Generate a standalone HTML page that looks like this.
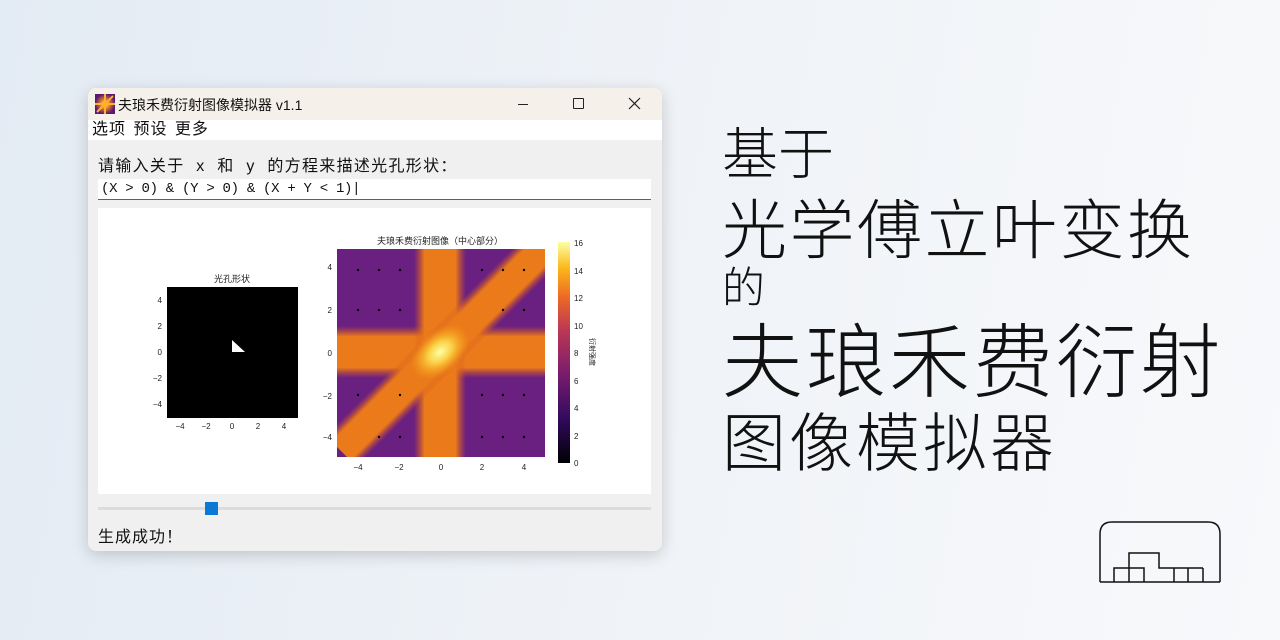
<!DOCTYPE html>
<html><head><meta charset="utf-8"><style>
*{margin:0;padding:0;box-sizing:border-box}
body{width:1280px;height:640px;overflow:hidden;background:linear-gradient(100deg,#e3ebf4 0%,#eef2f7 45%,#f8f9fb 100%);font-family:"Liberation Sans","Noto Sans CJK SC",sans-serif;position:relative}
.win{position:absolute;left:88px;top:88px;width:574px;height:463px;border-radius:8px;background:#f0f0f0;box-shadow:0 4px 16px rgba(0,0,0,.18);overflow:hidden}
.title{height:32px;background:#f5f1ea;position:relative;font-size:14px;color:#111}
.menu{height:20px;background:#fff;font-size:16px;line-height:20px;padding-left:4px;color:#111;letter-spacing:1px;word-spacing:2px}
.ab{position:absolute;font-family:"Liberation Sans","Noto Sans CJK SC",sans-serif}
.big{position:absolute;left:722px;font-family:"Noto Sans CJK SC",sans-serif;font-weight:300;color:#111;white-space:nowrap;line-height:1}
</style></head><body>
<div class="win">
 <div class="title">
  <svg class="ab" style="left:7px;top:6px" width="20" height="20"><defs><radialGradient id="ig"><stop offset="0" stop-color="#fff6a0"/><stop offset=".4" stop-color="#f08a20"/><stop offset="1" stop-color="#5a1a70"/></radialGradient></defs><rect width="20" height="20" fill="url(#ig)"/><path d="M0 10H20M10 0V20M2 18L18 2" stroke="#ffb030" stroke-width="2"/></svg>
  <span class="ab" style="left:30px;top:7px">夫琅禾费衍射图像模拟器 v1.1</span>
  <div class="ab" style="left:430px;top:16px;width:10px;height:1px;background:#222"></div>
  <div class="ab" style="left:485px;top:10px;width:11px;height:11px;border:1.2px solid #222;border-radius:1px"></div>
  <svg class="ab" style="left:540px;top:9px" width="13" height="13"><path d="M1 1L12 12M12 1L1 12" stroke="#222" stroke-width="1.2"/></svg>
 </div>
 <div class="menu">选项 预设 更多</div>
 <div class="ab" style="left:10px;top:64px;font-size:16px;color:#111;letter-spacing:1.3px;word-spacing:6px;white-space:pre">请输入关于 x 和 y 的方程来描述光孔形状：</div>
 <div class="ab" style="left:10px;top:91px;width:553px;height:21px;background:#fff;border-bottom:1.5px solid #1f6fc0;font-family:'Liberation Mono','Noto Sans CJK SC',monospace;font-size:14px;line-height:20px;padding-left:3px;color:#111;letter-spacing:-0.3px">(X &gt; 0) &amp; (Y &gt; 0) &amp; (X + Y &lt; 1)|</div>
 <div class="ab" style="left:10px;top:120px;width:553px;height:286px;background:#fff"></div>
 <div class="ab" style="left:10px;top:419px;width:553px;height:3px;background:#dcdcdc"></div>
 <div class="ab" style="left:117px;top:414px;width:13px;height:13px;background:#0a78d7"></div>
 <div class="ab" style="left:10px;top:435px;font-size:16px;color:#111;letter-spacing:1px">生成成功！</div>
</div>
<svg class="ab" style="left:0;top:0" width="662" height="500" font-family="Liberation Sans,Noto Sans CJK SC,sans-serif" font-size="8" fill="#222">
 <text x="232" y="282" text-anchor="middle" font-size="9">光孔形状</text>
 <rect x="167" y="287" width="131" height="131" fill="#000"/>
 <path d="M232 340V352H245Z" fill="#fff"/>
 <g text-anchor="end"><text x="162" y="303">4</text><text x="162" y="329">2</text><text x="162" y="355">0</text><text x="162" y="381">−2</text><text x="162" y="407">−4</text></g>
 <g text-anchor="middle"><text x="180" y="429">−4</text><text x="206" y="429">−2</text><text x="232" y="429">0</text><text x="258" y="429">2</text><text x="284" y="429">4</text></g>
 <defs>
  <linearGradient id="hb" x1="0" y1="0" x2="0" y2="1"><stop offset="0" stop-color="#d8561f" stop-opacity="0"/><stop offset=".2" stop-color="#ea7a1a"/><stop offset=".8" stop-color="#ea7a1a"/><stop offset="1" stop-color="#d8561f" stop-opacity="0"/></linearGradient>
  <linearGradient id="vb" x1="0" y1="0" x2="1" y2="0"><stop offset="0" stop-color="#d8561f" stop-opacity="0"/><stop offset=".2" stop-color="#ea7a1a"/><stop offset=".8" stop-color="#ea7a1a"/><stop offset="1" stop-color="#d8561f" stop-opacity="0"/></linearGradient>
  <radialGradient id="rc"><stop offset="0" stop-color="#fcffa4"/><stop offset=".4" stop-color="#fbd045"/><stop offset="1" stop-color="#f8a010" stop-opacity="0"/></radialGradient>
  <linearGradient id="cb" x1="0" y1="1" x2="0" y2="0"><stop offset="0" stop-color="#000004"/><stop offset=".2" stop-color="#320a5e"/><stop offset=".4" stop-color="#781c6d"/><stop offset=".6" stop-color="#bc3754"/><stop offset=".75" stop-color="#ed6925"/><stop offset=".88" stop-color="#fbb61a"/><stop offset="1" stop-color="#fcffa4"/></linearGradient>
  <clipPath id="hc"><rect x="337" y="249" width="208" height="208"/></clipPath>
 </defs>
 <text x="440" y="244" text-anchor="middle" font-size="9">夫琅禾费衍射图像（中心部分）</text>
 <g clip-path="url(#hc)">
  <rect x="337" y="249" width="208" height="208" fill="#6a2080"/>
  <rect x="337" y="326" width="208" height="52" fill="url(#hb)"/>
  <rect x="414" y="249" width="52" height="208" fill="url(#vb)"/>
  <rect x="300" y="330" width="300" height="44" fill="url(#hb)" transform="rotate(-45 440 352)"/>
  <ellipse cx="440" cy="352" rx="34" ry="22" fill="url(#rc)" transform="rotate(-40 440 352)"/>
  <g fill="#000">
   <circle cx="358" cy="270" r="1.2"/><circle cx="379" cy="270" r="1.2"/><circle cx="400" cy="270" r="1.2"/><circle cx="482" cy="270" r="1.2"/><circle cx="503" cy="270" r="1.2"/><circle cx="524" cy="270" r="1.2"/>
   <circle cx="358" cy="310" r="1.2"/><circle cx="379" cy="310" r="1.2"/><circle cx="400" cy="310" r="1.2"/><circle cx="503" cy="310" r="1.2"/><circle cx="524" cy="310" r="1.2"/>
   <circle cx="358" cy="395" r="1.2"/><circle cx="400" cy="395" r="1.2"/><circle cx="482" cy="395" r="1.2"/><circle cx="503" cy="395" r="1.2"/><circle cx="524" cy="395" r="1.2"/>
   <circle cx="379" cy="437" r="1.2"/><circle cx="400" cy="437" r="1.2"/><circle cx="482" cy="437" r="1.2"/><circle cx="503" cy="437" r="1.2"/><circle cx="524" cy="437" r="1.2"/>
  </g>
 </g>
 <g text-anchor="end"><text x="332" y="270">4</text><text x="332" y="313">2</text><text x="332" y="356">0</text><text x="332" y="399">−2</text><text x="332" y="440">−4</text></g>
 <g text-anchor="middle"><text x="358" y="470">−4</text><text x="399" y="470">−2</text><text x="441" y="470">0</text><text x="482" y="470">2</text><text x="524" y="470">4</text></g>
 <rect x="558" y="242" width="12" height="221" fill="url(#cb)"/>
 <g><text x="574" y="246">16</text><text x="574" y="274">14</text><text x="574" y="301">12</text><text x="574" y="329">10</text><text x="574" y="356">8</text><text x="574" y="384">6</text><text x="574" y="411">4</text><text x="574" y="439">2</text><text x="574" y="466">0</text></g>
 <text x="590" y="352" font-size="7" transform="rotate(90 590 352)" text-anchor="middle">衍射强度</text>
</svg>
<div class="big" style="top:123px;font-size:56px">基于</div>
<div class="big" style="top:193px;font-size:65px;letter-spacing:2.5px">光学傅立叶变换</div>
<div class="big" style="top:264px;font-size:43px">的</div>
<div class="big" style="top:316px;font-size:81px;letter-spacing:2.5px">夫琅禾费衍射</div>
<div class="big" style="top:407px;font-size:64px;letter-spacing:3px">图像模拟器</div>
<svg class="ab" style="left:1098px;top:520px" width="124" height="64"><path d="M2 62V14Q2 2 14 2H110Q122 2 122 14V62M2 62H122M16 62V48H46V62M31 48V62M31 48V33H61V48H90V62M76 48V62M105 48V62M90 48H105" fill="none" stroke="#111" stroke-width="1.5"/></svg>
</body></html>
